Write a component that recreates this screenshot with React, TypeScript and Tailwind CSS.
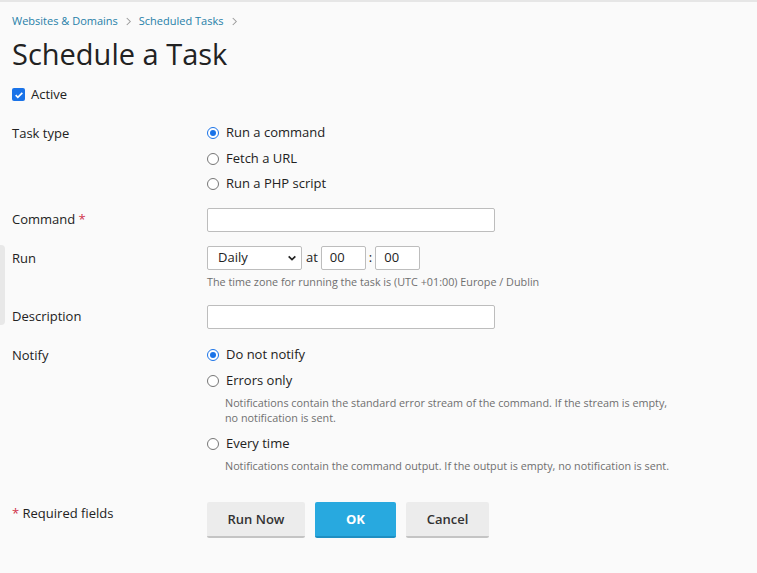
import { useState } from 'react';

const Radio = ({ checked }: { checked?: boolean }) => (
  <span
    className={`inline-flex h-[12px] w-[12px] shrink-0 items-center justify-center rounded-full border bg-white ${
      checked ? 'border-[#1a73e8]' : 'border-[#767676]'
    }`}
  >
    {checked && <span className="h-[6px] w-[6px] rounded-full bg-[#1a73e8]" />}
  </span>
);

const Chevron = () => (
  <svg viewBox="0 0 8 10" className="h-[9px] w-[7px]">
    <path d="M2 1l4 4-4 4" fill="none" stroke="#9a9a9a" strokeWidth="1.2" />
  </svg>
);

const App = () => {
  const [taskType] = useState('command');
  const [notify] = useState('none');

  const taskTypes = [
    { id: 'command', label: 'Run a command' },
    { id: 'url', label: 'Fetch a URL' },
    { id: 'php', label: 'Run a PHP script' },
  ];

  return (
    <div
      className="relative min-h-[573px] w-full border-t-2 border-[#e6e6e6] bg-[#fafafa] text-[13px] text-[#222]"
      style={{ fontFamily: '"Open Sans", Arial, sans-serif' }}
    >
      {/* left edge handle */}
      <div className="absolute left-0 top-[243px] h-[80px] w-[5px] rounded-r bg-[#e8e8e8]" />

      <div className="px-[12px] pt-[10px]">
        {/* Breadcrumbs */}
        <div className="flex h-[18px] items-center gap-[7px] text-[11px] text-[#2780a8]">
          <span>Websites &amp; Domains</span>
          <Chevron />
          <span>Scheduled Tasks</span>
          <Chevron />
        </div>

        <h1 className="mt-[2px] text-[29px] leading-[44px] text-[#222]">Schedule a Task</h1>

        <label className="mt-[9px] flex items-center gap-[6px]">
          <span className="flex h-[13px] w-[13px] items-center justify-center rounded-[2px] bg-[#1a73e8]">
            <svg viewBox="0 0 12 12" className="h-[10px] w-[10px]">
              <path d="M2 6.2l2.6 2.6L10 3.4" fill="none" stroke="#fff" strokeWidth="2" />
            </svg>
          </span>
          <span>Active</span>
        </label>

        {/* Task type */}
        <div className="mt-[19px] flex">
          <div className="w-[195px]">Task type</div>
          <div className="flex flex-col gap-[6.5px]">
            {taskTypes.map((t) => (
              <label key={t.id} className="flex h-[19px] items-center gap-[7px]">
                <Radio checked={taskType === t.id} />
                <span>{t.label}</span>
              </label>
            ))}
          </div>
        </div>

        {/* Command */}
        <div className="mt-[14px] flex items-center">
          <div className="w-[195px]">
            Command <span className="text-[#d0324a]">*</span>
          </div>
          <div className="h-[24px] w-[288px] rounded-[2px] border border-[#bdbdbd] bg-white" />
        </div>

        {/* Run */}
        <div className="mt-[14px] flex">
          <div className="w-[195px] pt-[3px]">Run</div>
          <div>
            <div className="flex items-center">
              <div className="flex h-[24px] w-[95px] items-center justify-between rounded-[2px] border border-[#bdbdbd] bg-white pl-[10px] pr-[4px]">
                <span>Daily</span>
                <svg viewBox="0 0 12 12" className="h-[10px] w-[10px]">
                  <path d="M2 4l4 4 4-4" fill="none" stroke="#222" strokeWidth="2" />
                </svg>
              </div>
              <span className="ml-[4px] mr-[3px]">at</span>
              <div className="flex h-[24px] w-[45px] items-center rounded-[2px] border border-[#bdbdbd] bg-white px-[8px]">
                00
              </div>
              <span className="mx-[3px]">:</span>
              <div className="flex h-[24px] w-[45px] items-center rounded-[2px] border border-[#bdbdbd] bg-white px-[8px]">
                00
              </div>
            </div>
            <div className="mt-[4px] text-[10.8px] text-[#6f6f6f]">
              The time zone for running the task is (UTC +01:00) Europe / Dublin
            </div>
          </div>
        </div>

        {/* Description */}
        <div className="mt-[15px] flex items-center">
          <div className="w-[195px]">Description</div>
          <div className="h-[24px] w-[288px] rounded-[2px] border border-[#bdbdbd] bg-white" />
        </div>

        {/* Notify */}
        <div className="mt-[17px] flex">
          <div className="w-[195px]">Notify</div>
          <div className="flex flex-col">
            <label className="flex h-[19px] items-center gap-[7px]">
              <Radio checked={notify === 'none'} />
              <span>Do not notify</span>
            </label>
            <label className="mt-[7px] flex h-[19px] items-center gap-[7px]">
              <Radio checked={notify === 'errors'} />
              <span>Errors only</span>
            </label>
            <div className="ml-[18px] mt-[4px] text-[10.8px] leading-[15px] text-[#6f6f6f]">
              Notifications contain the standard error stream of the command. If the stream is empty,
              <br />
              no notification is sent.
            </div>
            <label className="mt-[10px] flex h-[19px] items-center gap-[7px]">
              <Radio checked={notify === 'every'} />
              <span>Every time</span>
            </label>
            <div className="ml-[18px] mt-[4px] text-[10.8px] leading-[15px] text-[#6f6f6f]">
              Notifications contain the command output. If the output is empty, no notification is sent.
            </div>
          </div>
        </div>

        {/* Footer */}
        <div className="mt-[29px] flex">
          <div className="w-[195px] pt-[2px]">
            <span className="text-[#d0324a]">*</span> Required fields
          </div>
          <div className="flex gap-[10px]">
            <button className="h-[36px] w-[98px] rounded-[2px] border-b-2 border-[#c4c4c4] bg-[#ececec] pt-[2px] text-[13px] font-semibold text-[#333]">
              Run Now
            </button>
            <button className="h-[36px] w-[81px] rounded-[2px] border-b-2 border-[#1e8fc2] bg-[#28a9df] pt-[2px] text-[13px] font-bold text-white">
              OK
            </button>
            <button className="h-[36px] w-[83px] rounded-[2px] border-b-2 border-[#c4c4c4] bg-[#ececec] pt-[2px] text-[13px] font-semibold text-[#333]">
              Cancel
            </button>
          </div>
        </div>
      </div>
    </div>
  );
};

export default App;
